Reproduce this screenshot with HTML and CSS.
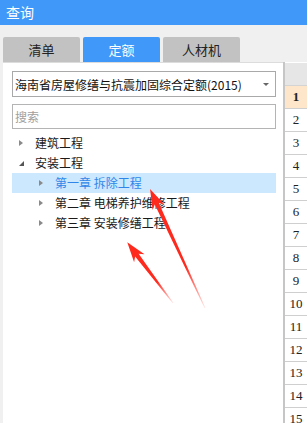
FILE: index.html
```html
<!DOCTYPE html>
<html lang="zh-CN">
<head>
  <meta charset="UTF-8" />
  <meta name="viewport" content="width=device-width, initial-scale=1.0" />
  <title>查询</title>
  <link rel="stylesheet" href="styles.css">
</head>
<body>
  <div class="titlebar">查询</div>

  <!-- 标签页 -->
  <div class="tabs">
    <div class="tab">清单</div>
    <div class="tab active">定额</div>
    <div class="tab">人材机</div>
  </div>

  <div class="main">
    <div class="panel">
      <div class="select">
        <span>海南省房屋修缮与抗震加固综合定额(2015)</span>
        <i class="caret"></i>
      </div>
      <div class="search">搜索</div>

      <ul class="tree">
        <li class="node"><i class="arrow"></i>建筑工程</li>
        <li class="node"><i class="arrow open"></i>安装工程</li>
        <li class="node child selected"><i class="arrow"></i>第一章 拆除工程</li>
        <li class="node child"><i class="arrow"></i>第二章 电梯养护维修工程</li>
        <li class="node child"><i class="arrow"></i>第三章 安装修缮工程</li>
      </ul>
    </div>

    <!-- 右侧行号 -->
    <div class="grid">
      <div class="cell head"></div>
      <div class="cell current">1</div>
      <div class="cell">2</div>
      <div class="cell">3</div>
      <div class="cell">4</div>
      <div class="cell">5</div>
      <div class="cell">6</div>
      <div class="cell">7</div>
      <div class="cell">8</div>
      <div class="cell">9</div>
      <div class="cell">10</div>
      <div class="cell">11</div>
      <div class="cell">12</div>
      <div class="cell">13</div>
      <div class="cell">14</div>
      <div class="cell">15</div>
    </div>
  </div>

  <!-- 标注箭头 -->
  <svg class="marks" width="307" height="423" viewBox="0 0 307 423">
    <defs>
      <linearGradient id="fade" x1="0" y1="0" x2="1" y2="0">
        <stop offset="0" stop-color="#ff2a1e" stop-opacity="0.1"/>
        <stop offset="0.35" stop-color="#ff2a1e" stop-opacity="1"/>
        <stop offset="1" stop-color="#ff2a1e" stop-opacity="1"/>
      </linearGradient>
    </defs>
    <g transform="translate(205 308) rotate(-114.8)">
      <polygon fill="url(#fade)" points="0,-0.4 115,-2.2 111,-6.5 131,0 111,6.5 115,2.2 0,0.4"/>
    </g>
    <g transform="translate(173 303) rotate(-127)">
      <polygon fill="url(#fade)" points="0,-0.4 60,-2.2 56,-6.5 76,0 56,6.5 60,2.2 0,0.4"/>
    </g>
  </svg>
</body>
</html>
```

FILE: styles.css
```css
body {
  margin: 0;
  width: 307px;
  height: 423px;
  overflow: hidden;
  position: relative;
  background-color: #f0f0f0;
  font-family: "Noto Sans CJK SC", "Noto Sans", sans-serif;
  font-size: 12px;
  color: #1a1a1a;
}
.titlebar {
  height: 25px;
  line-height: 25px;
  padding-left: 6px;
  background-color: #4098f9;
  color: #fff;
  font-size: 14px;
}
.tabs {
  display: flex;
  gap: 3px;
  padding: 12px 0 0 3px;
}
.tab {
  width: 77px;
  height: 25px;
  line-height: 25px;
  text-align: center;
  font-size: 13px;
  background-color: #c2c2c2;
  color: #222;
  border-radius: 2px 2px 0 0;
}
.tab.active {
  background-color: #4098f9;
  color: #fff;
}
.main {
  display: flex;
  margin-left: 3px;
  height: 361px;
}
.panel {
  width: 282px;
  background-color: #fff;
  border-top: 1px solid #dcdcdc;
  padding: 8px 7px 0 9px;
  box-sizing: border-box;
}
.select {
  height: 26px;
  border: 1px solid #a9a9a9;
  box-sizing: border-box;
  display: flex;
  align-items: center;
  justify-content: space-between;
  padding: 0 6px 0 2px;
  color: #111;
}
.caret {
  width: 0;
  height: 0;
  border-left: 3px solid transparent;
  border-right: 3px solid transparent;
  border-top: 3px solid #666;
}
.search {
  height: 25px;
  line-height: 23px;
  margin-top: 7px;
  border: 1px solid #b4b4b4;
  box-sizing: border-box;
  padding-left: 2px;
  color: #a0a0a0;
}
.tree {
  list-style: none;
  margin: 4px 0 0;
  padding: 0;
}
.node {
  height: 20px;
  line-height: 20px;
  display: flex;
  align-items: center;
  padding-left: 7px;
  white-space: nowrap;
}
.node.child {
  padding-left: 27px;
}
.node.selected {
  background-color: #cce8ff;
  color: #2f86e8;
}
.arrow {
  width: 0;
  height: 0;
  margin-right: 12px;
  border-top: 3.5px solid transparent;
  border-bottom: 3.5px solid transparent;
  border-left: 4px solid #8a8a8a;
}
.arrow.open {
  border-top: none;
  border-bottom: 5px solid #555;
  border-left: 5px solid transparent;
  margin-right: 11px;
}
.grid {
  width: 22px;
  border-left: 2px solid #c6c6c6;
  background-color: #fff;
}
.cell {
  height: 23px;
  line-height: 22px;
  border-bottom: 1px solid #cfcfcf;
  box-sizing: border-box;
  text-align: center;
  font-family: "Liberation Serif", serif;
  font-size: 13px;
  color: #222;
}
.cell.head {
  margin-top: 1px;
  background-color: #e6e6e6;
  border-bottom-color: #d4d4d4;
}
.cell.current {
  background-color: #fde6c9;
  font-weight: bold;
}
.marks {
  position: absolute;
  left: 0;
  top: 0;
  pointer-events: none;
}
```
